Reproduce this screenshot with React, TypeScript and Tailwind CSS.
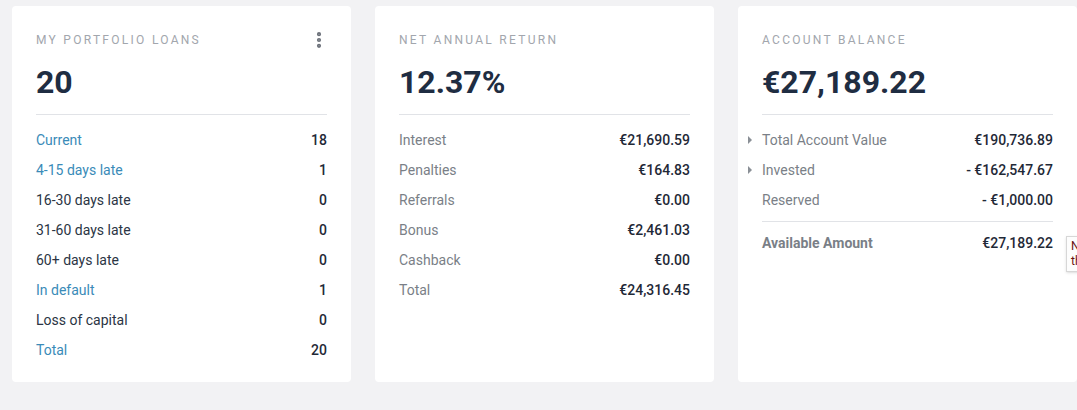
import { EllipsisVertical } from "lucide-react";

type Row = { label: string; value: string; tone?: "link" | "dark" | "muted"; caret?: boolean };

const loans: Row[] = [
  { label: "Current", value: "18", tone: "link" },
  { label: "4-15 days late", value: "1", tone: "link" },
  { label: "16-30 days late", value: "0", tone: "dark" },
  { label: "31-60 days late", value: "0", tone: "dark" },
  { label: "60+ days late", value: "0", tone: "dark" },
  { label: "In default", value: "1", tone: "link" },
  { label: "Loss of capital", value: "0", tone: "dark" },
  { label: "Total", value: "20", tone: "link" },
];

const returns: Row[] = [
  { label: "Interest", value: "€21,690.59" },
  { label: "Penalties", value: "€164.83" },
  { label: "Referrals", value: "€0.00" },
  { label: "Bonus", value: "€2,461.03" },
  { label: "Cashback", value: "€0.00" },
  { label: "Total", value: "€24,316.45" },
];

const balance: Row[] = [
  { label: "Total Account Value", value: "€190,736.89", caret: true },
  { label: "Invested", value: "- €162,547.67", caret: true },
  { label: "Reserved", value: "- €1,000.00" },
];

const toneClass = {
  link: "text-[#3a8bb8]",
  dark: "text-[#2b3544]",
  muted: "text-[#7a7f87]",
};

function Line({ row }: { row: Row }) {
  return (
    <div className="flex h-[30px] items-center justify-between text-[14px]">
      <span className={`relative ${toneClass[row.tone ?? "muted"]}`}>
        {row.caret && (
          <span className="absolute left-[-14px] top-[50%] -translate-y-1/2 border-y-[4px] border-l-[4px] border-y-transparent border-l-[#8a8f96]" />
        )}
        {row.label}
      </span>
      <span className="font-medium text-[#1f2937]">{row.value}</span>
    </div>
  );
}

function Card({
  title,
  big,
  menu,
  children,
}: {
  title: string;
  big: string;
  menu?: boolean;
  children: React.ReactNode;
}) {
  return (
    <div className="w-[339px] shrink-0 rounded-[4px] bg-white px-6 pt-[26px] pb-[17px]">
      <div className="flex h-4 items-center justify-between">
        <h3 className="text-[12px] font-normal uppercase tracking-[0.19em] text-[#a2a6ad]">{title}</h3>
        {menu && <EllipsisVertical className="mr-[-2px] h-[20px] w-[20px] text-[#6b7079]" strokeWidth={3} />}
      </div>
      <div className="mt-4 h-9 text-[32px] font-bold leading-9 text-[#1f2d42]">{big}</div>
      <div className="mt-[14px] border-t border-[#e1e3e7]" />
      <div className="pt-[10px]">{children}</div>
    </div>
  );
}

export default function App() {
  return (
    <div
      className="relative h-[410px] w-[1077px] overflow-hidden bg-[#f2f2f4]"
      style={{ fontFamily: "Roboto, 'Noto Sans', sans-serif" }}
    >
      <div className="flex items-stretch gap-6 pl-3 pt-[6px]">
        <Card title="My Portfolio Loans" big="20" menu>
          {loans.map((r) => (
            <Line key={r.label} row={r} />
          ))}
        </Card>
        <Card title="Net Annual Return" big="12.37%">
          {returns.map((r) => (
            <Line key={r.label} row={r} />
          ))}
        </Card>
        <Card title="Account Balance" big="€27,189.22">
          {balance.map((r) => (
            <Line key={r.label} row={r} />
          ))}
          <div className="mt-[6px] border-t border-[#e1e3e7]" />
          <div className="mt-[6px] flex h-[30px] items-center justify-between text-[14px]">
            <span className="font-bold text-[#7a7f87]">Available Amount</span>
            <span className="font-medium text-[#1f2937]">€27,189.22</span>
          </div>
        </Card>
      </div>
      <div className="absolute left-[1066px] top-[236px] w-[80px] border border-[#d7d7d7] bg-[#fdfdfd] px-[4px] py-[2px] text-[12px] leading-[15px] text-[#6b1212] shadow-sm">
        Not
        <br />
        the
      </div>
    </div>
  );
}
